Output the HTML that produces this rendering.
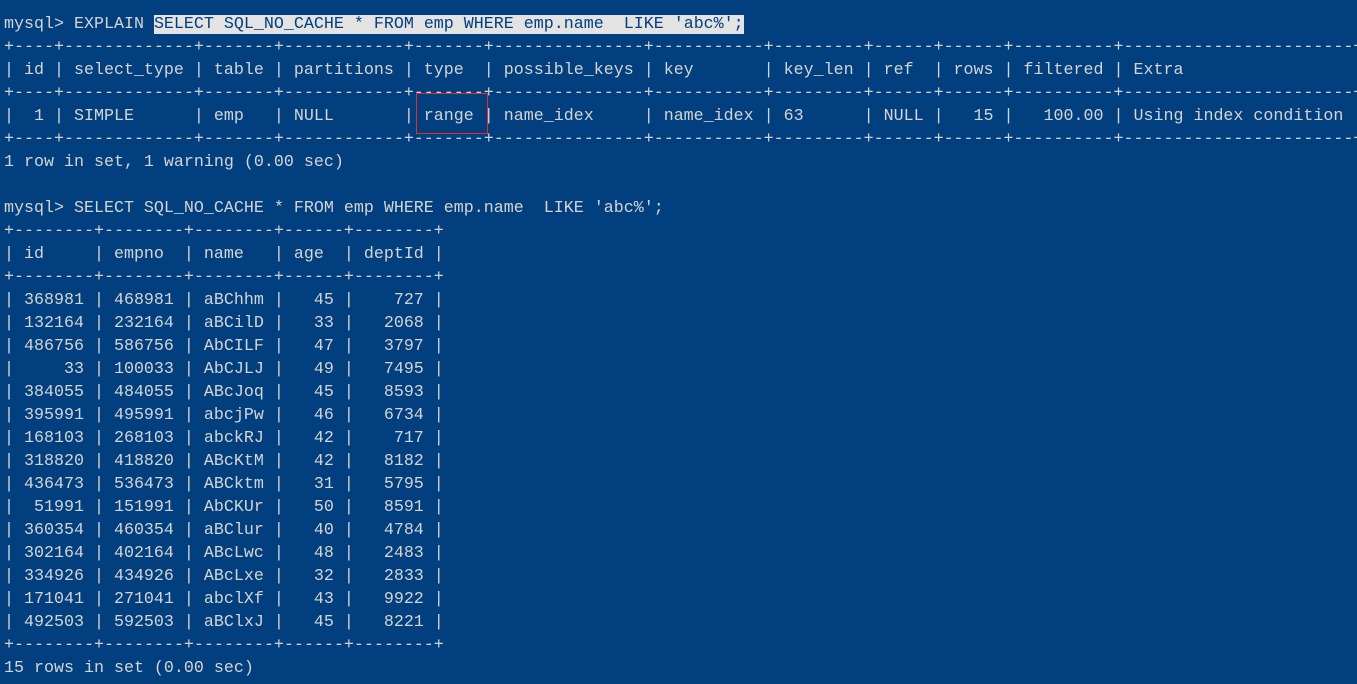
<!DOCTYPE html>
<html><head><meta charset="utf-8"><style>
html,body{margin:0;padding:0;background:#013f7f;width:1357px;height:684px;overflow:hidden}
pre{position:absolute;left:4px;top:13px;margin:0;font-family:"Liberation Mono",monospace;font-size:16.67px;line-height:23px;color:#d4d4d4;white-space:pre}
.hl{background:#e3e3e3;color:#013f7f}
.box{position:absolute;left:416px;top:93px;width:72px;height:41px;border:1px solid #e0302a;box-sizing:border-box}
</style></head><body>
<pre>mysql&gt; EXPLAIN <span class="hl">SELECT SQL_NO_CACHE * FROM emp WHERE emp.name  LIKE 'abc%';</span>
+----+-------------+-------+------------+-------+---------------+-----------+---------+------+------+----------+-----------------------+
| id | select_type | table | partitions | type  | possible_keys | key       | key_len | ref  | rows | filtered | Extra                 |
+----+-------------+-------+------------+-------+---------------+-----------+---------+------+------+----------+-----------------------+
|  1 | SIMPLE      | emp   | NULL       | range | name_idex     | name_idex | 63      | NULL |   15 |   100.00 | Using index condition |
+----+-------------+-------+------------+-------+---------------+-----------+---------+------+------+----------+-----------------------+
1 row in set, 1 warning (0.00 sec)

mysql&gt; SELECT SQL_NO_CACHE * FROM emp WHERE emp.name  LIKE 'abc%';
+--------+--------+--------+------+--------+
| id     | empno  | name   | age  | deptId |
+--------+--------+--------+------+--------+
| 368981 | 468981 | aBChhm |   45 |    727 |
| 132164 | 232164 | aBCilD |   33 |   2068 |
| 486756 | 586756 | AbCILF |   47 |   3797 |
|     33 | 100033 | AbCJLJ |   49 |   7495 |
| 384055 | 484055 | ABcJoq |   45 |   8593 |
| 395991 | 495991 | abcjPw |   46 |   6734 |
| 168103 | 268103 | abckRJ |   42 |    717 |
| 318820 | 418820 | ABcKtM |   42 |   8182 |
| 436473 | 536473 | ABCktm |   31 |   5795 |
|  51991 | 151991 | AbCKUr |   50 |   8591 |
| 360354 | 460354 | aBClur |   40 |   4784 |
| 302164 | 402164 | ABcLwc |   48 |   2483 |
| 334926 | 434926 | ABcLxe |   32 |   2833 |
| 171041 | 271041 | abclXf |   43 |   9922 |
| 492503 | 592503 | aBClxJ |   45 |   8221 |
+--------+--------+--------+------+--------+
15 rows in set (0.00 sec)</pre>
<div class="box"></div>
</body></html>
